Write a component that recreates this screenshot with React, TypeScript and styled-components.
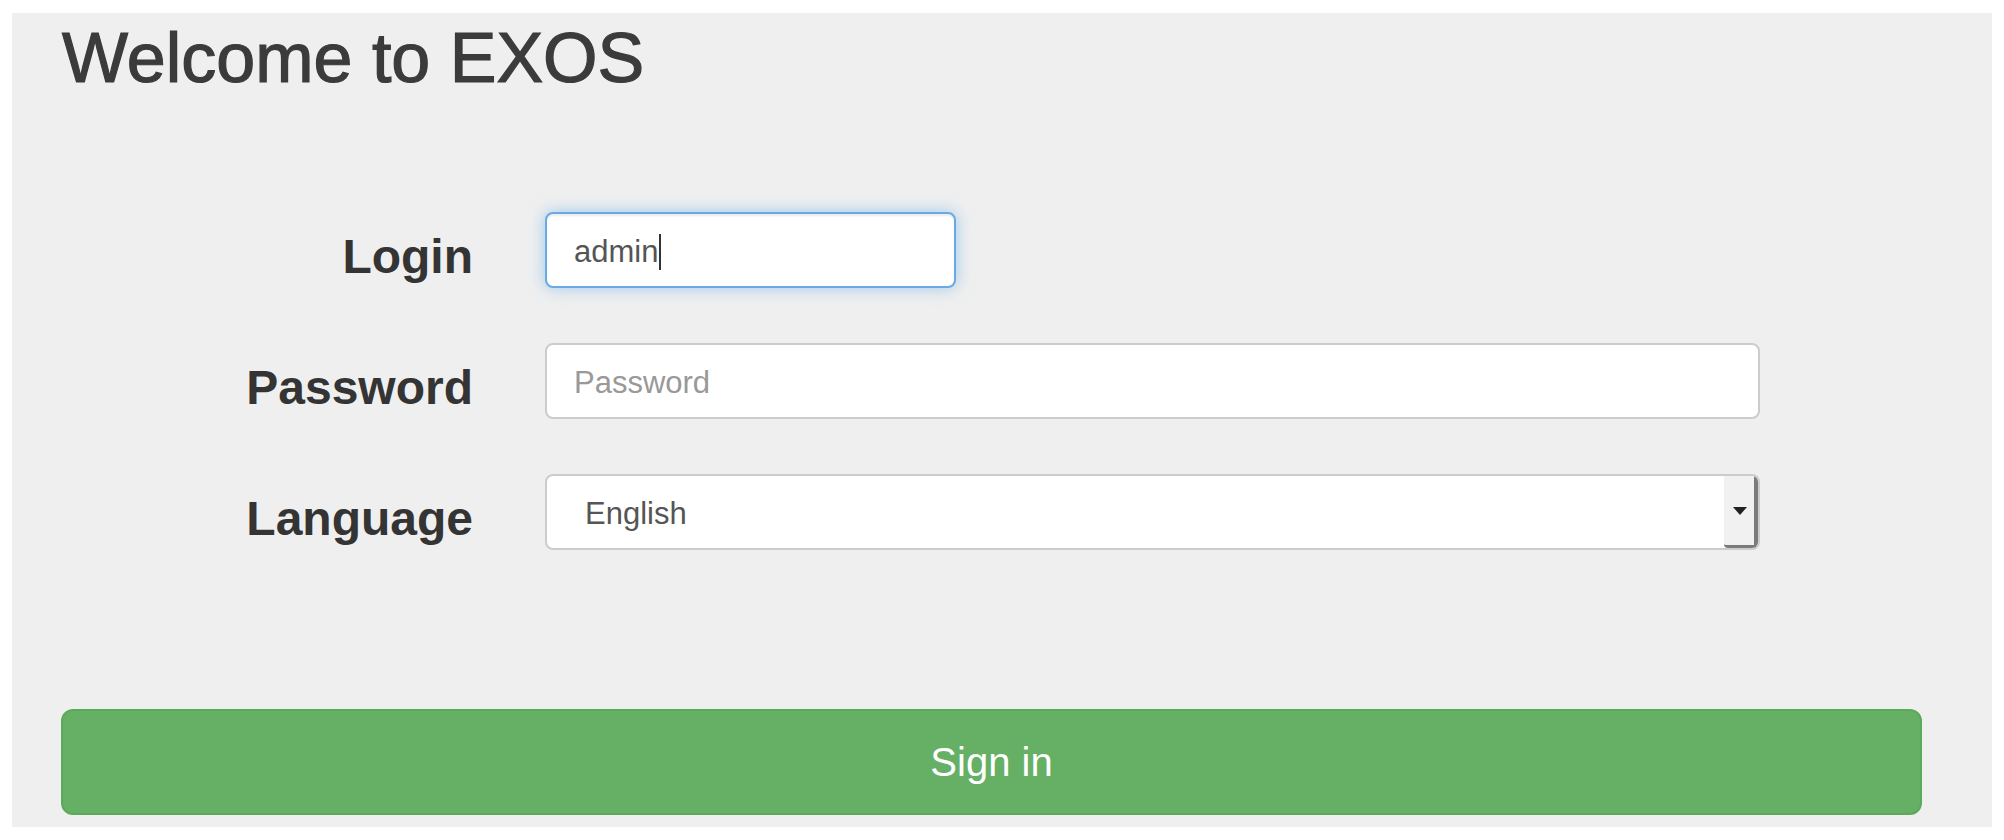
import React from "react";
import styled, { createGlobalStyle } from "styled-components";

const GlobalStyle = createGlobalStyle`
  html, body {
    margin: 0;
    padding: 0;
    background: #ffffff;
  }
  body {
    font-family: "Liberation Sans", Helvetica, Arial, sans-serif;
  }
  * { box-sizing: border-box; }
`;

const Page = styled.div`
  padding: 13px 12px;
`;

const Panel = styled.section`
  height: 814px;
  background: #efefef;
  padding: 7px 70px 0 50px;
  display: flex;
  flex-direction: column;
`;

const Title = styled.h1`
  margin: 0;
  font-size: 70px;
  line-height: 77px;
  font-weight: 400;
  color: #3b3b3c;
  -webkit-text-stroke: 1.2px #3b3b3c;
`;

const Form = styled.form`
  margin: 115px 0 0;
  display: grid;
  grid-template-columns: 411px 1215px;
  column-gap: 72px;
  row-gap: 55px;
  grid-auto-rows: 76px;
`;

const Label = styled.label`
  text-align: right;
  font-size: 48px;
  font-weight: 700;
  line-height: 62px;
  padding-top: 14px;
  color: #343434;
`;

const fieldBase = `
  height: 76px;
  border: 2px solid #cccccc;
  border-radius: 8px;
  background: #ffffff;
  font-family: "Liberation Sans", Helvetica, Arial, sans-serif;
  font-size: 31px;
  color: #555555;
`;

const FocusedField = styled.div<{ $width: number }>`
  ${fieldBase}
  width: ${(p) => p.$width}px;
  border-color: #6aa9e4;
  box-shadow: inset 0 2px 2px rgba(0, 0, 0, 0.075),
    0 0 16px rgba(102, 175, 233, 0.6);
  display: flex;
  align-items: center;
  padding: 3px 27px 0;
`;

const FieldValue = styled.span`
  line-height: 31px;
`;

const Caret = styled.span`
  display: inline-block;
  width: 2px;
  height: 36px;
  margin-left: 1px;
  background: #333333;
`;

const TextInput = styled.input`
  ${fieldBase}
  width: 100%;
  padding: 3px 27px 0;
  outline: none;
  &::placeholder {
    color: #999999;
  }
`;

const SelectBox = styled.div`
  ${fieldBase}
  width: 100%;
  display: flex;
  overflow: hidden;
`;

const SelectValue = styled.span`
  flex: 1;
  display: flex;
  align-items: center;
  padding: 3px 38px 0;
`;

const ArrowButton = styled.span`
  width: 34px;
  display: flex;
  align-items: center;
  justify-content: center;
  padding-left: 2px;
  background: #f1f1f1;
  border-right: 4px solid #7b7b7b;
  border-bottom: 3px solid #7b7b7b;
  border-bottom-left-radius: 4px;
`;

const Triangle = styled.span`
  width: 0;
  height: 0;
  border-left: 7px solid transparent;
  border-right: 7px solid transparent;
  border-top: 8px solid #222222;
`;

const SubmitButton = styled.button`
  margin: 159px 0 0 -1px;
  height: 106px;
  width: calc(100% + 1px);
  border: 2px solid #5ca95c;
  border-radius: 12px;
  background: #65b065;
  color: #ffffff;
  font-family: "Liberation Sans", Helvetica, Arial, sans-serif;
  font-size: 40px;
  cursor: pointer;
`;

export default function App() {
  return (
    <>
      <GlobalStyle />
      <Page>
        <Panel>
          <Title>Welcome to EXOS</Title>
          <Form onSubmit={(e) => e.preventDefault()}>
            <Label>Login</Label>
            <FocusedField $width={411} role="textbox">
              <FieldValue>admin</FieldValue>
              <Caret />
            </FocusedField>
            <Label>Password</Label>
            <TextInput type="password" placeholder="Password" />
            <Label>Language</Label>
            <SelectBox role="combobox">
              <SelectValue>English</SelectValue>
              <ArrowButton>
                <Triangle />
              </ArrowButton>
            </SelectBox>
          </Form>
          <SubmitButton type="submit">Sign in</SubmitButton>
        </Panel>
      </Page>
    </>
  );
}
